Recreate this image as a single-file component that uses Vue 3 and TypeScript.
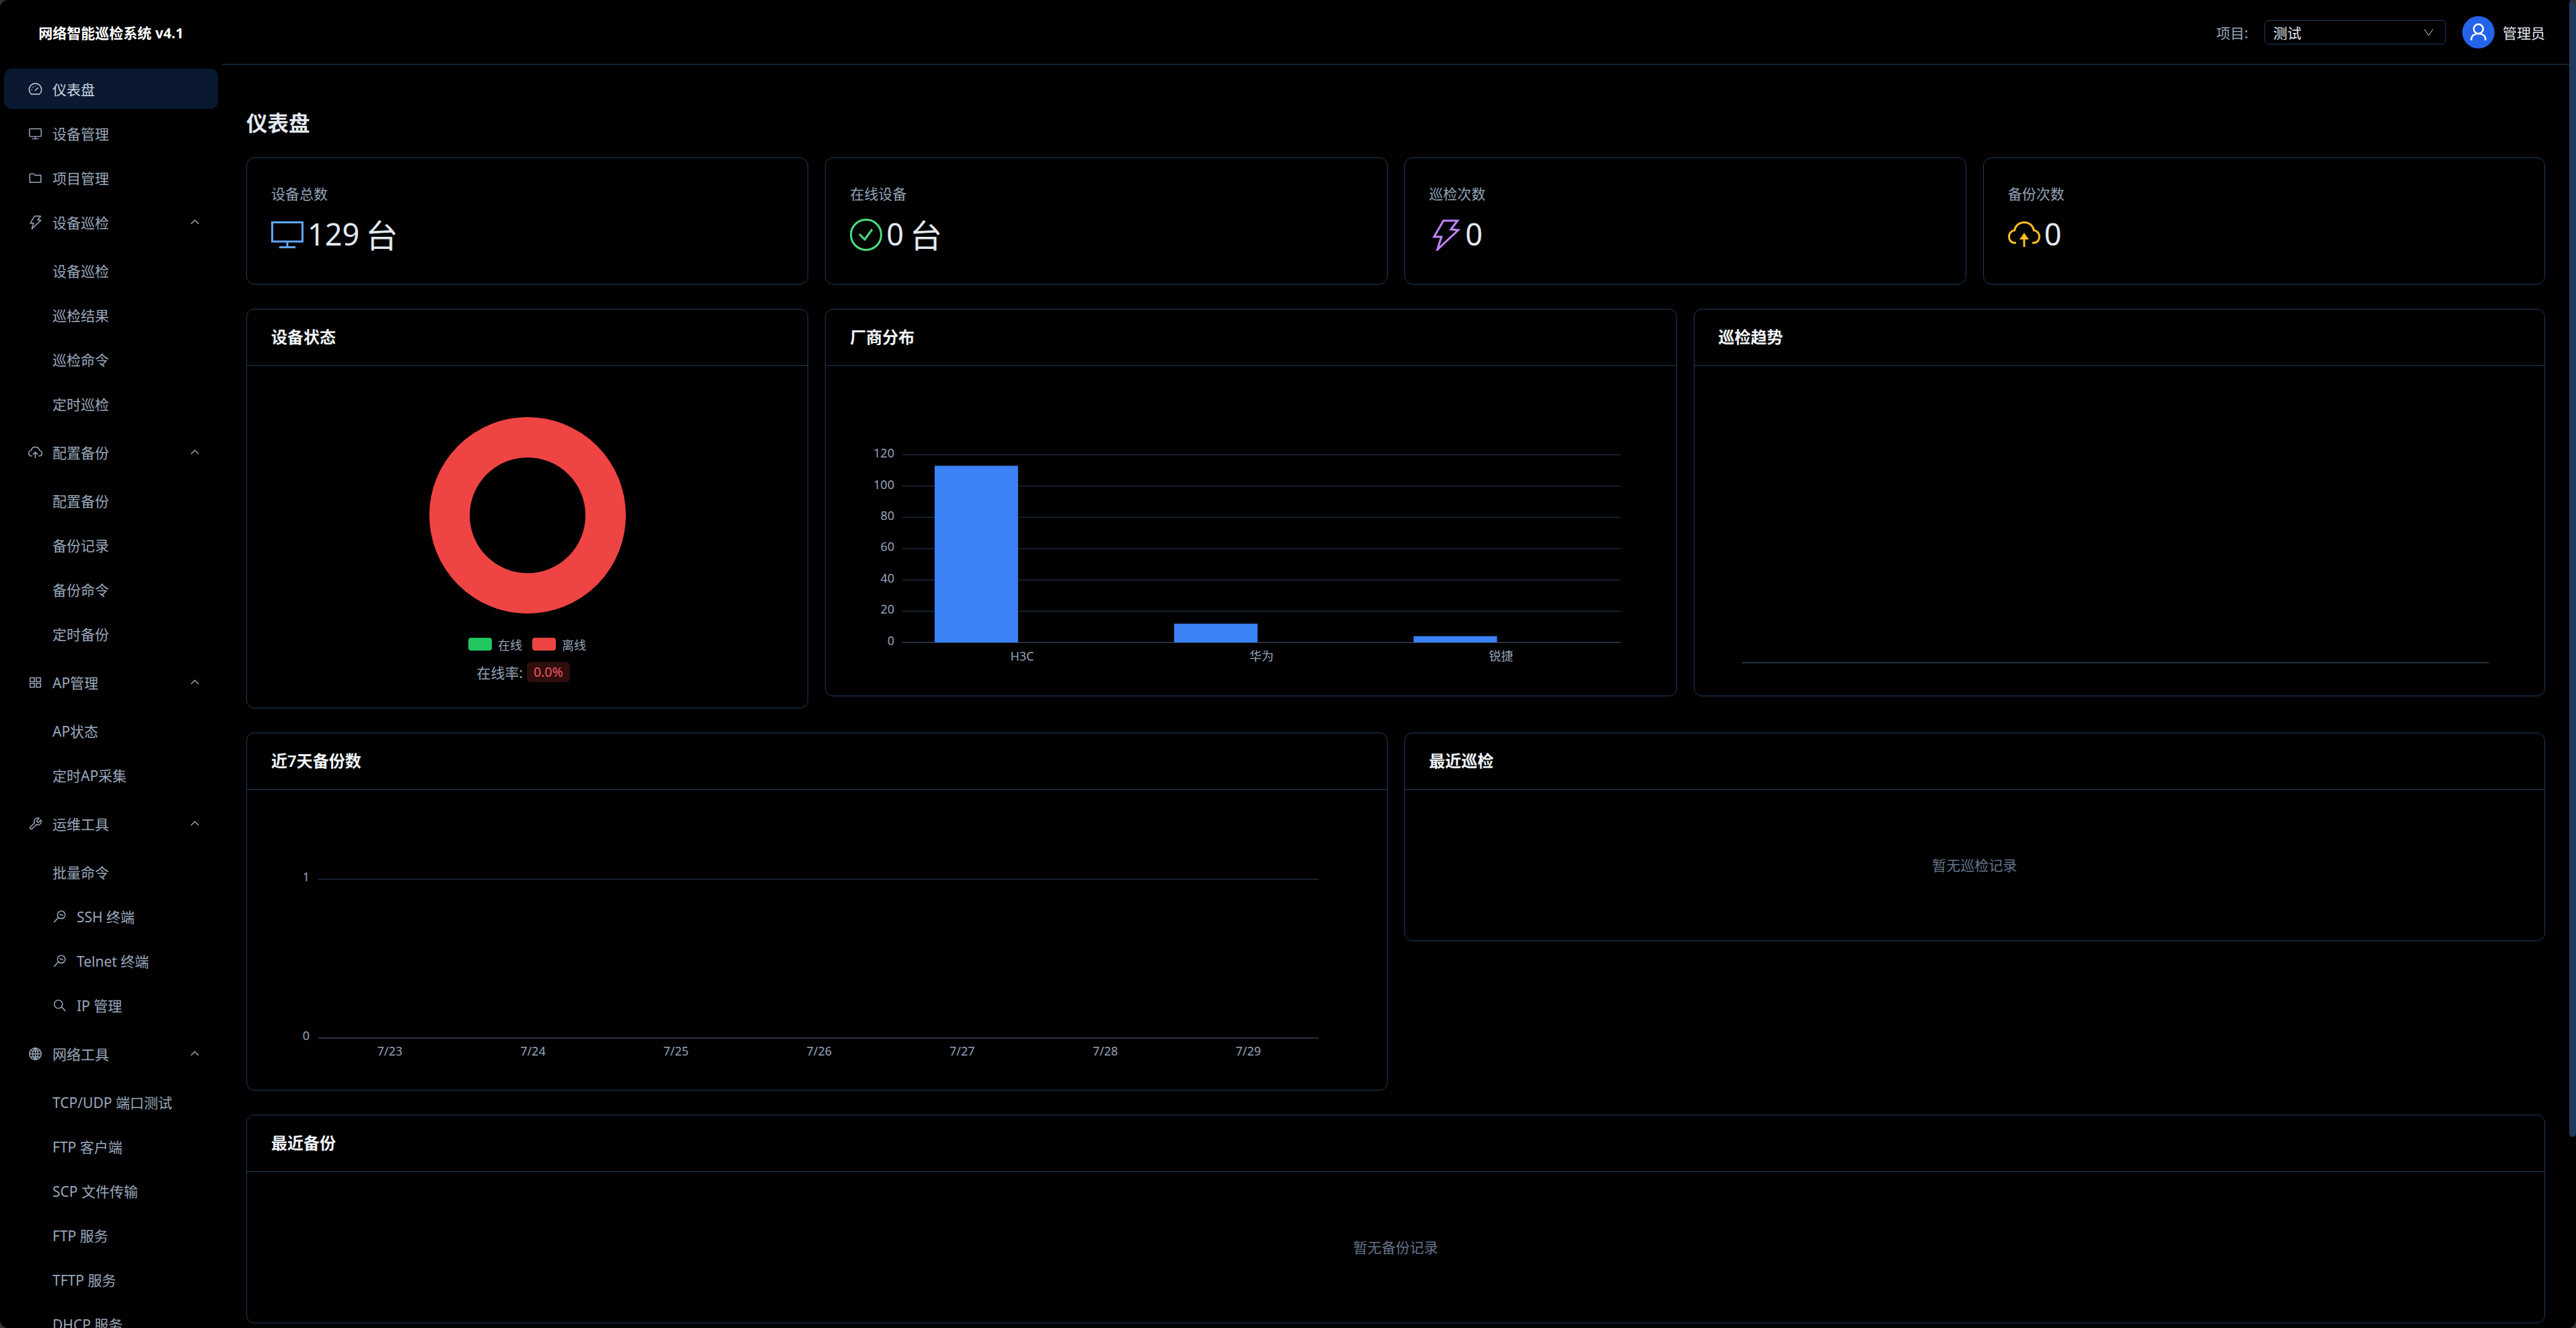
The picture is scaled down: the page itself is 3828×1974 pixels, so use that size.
<script setup lang="ts">
interface MenuChild {
  label: string
  icon?: string
}

interface MenuItem {
  label: string
  icon: string
  active?: boolean
  children?: MenuChild[]
}

const icons: Record<string, string> = {
  gauge: 'M5 20.5a10.5 10.5 0 1 1 14 0z M12 14l4-4 M6 13h.01 M8 8.5h.01 M12 7h.01',
  monitor: 'M3 4h18a1 1 0 0 1 1 1v11a1 1 0 0 1-1 1H3a1 1 0 0 1-1-1V5a1 1 0 0 1 1-1z M12 17v4 M7 21h10',
  folder: 'M2.5 5h7l2 2.5h10v12h-19z',
  bolt: 'M10.5 1.5H21L16 8l5.5.5L6 23l3-9.5H3.5z',
  cloud: 'M6 18H5C2 18 .8 15.5 .8 13.5 .8 10.5 3 8.8 4.8 8.8 5.5 5 8.5 2.8 12 2.8s6.5 2.2 7.2 6c1.8 0 4 1.7 4 4.7 0 2-1.2 4.5-4.2 4.5h-1 M12 21v-9 M8.5 15l3.5-3.5 3.5 3.5',
  grid: 'M3 4h7.5v6.5H3z M13.5 4H21v6.5h-7.5z M3 13.5h7.5V20H3z M13.5 13.5H21V20h-7.5z',
  wrench: 'M14.7 6.3a1 1 0 0 0 0 1.4l1.6 1.6a1 1 0 0 0 1.4 0l3.77-3.77a6 6 0 0 1-7.94 7.94l-6.91 6.91a2.12 2.12 0 0 1-3-3l6.91-6.91a6 6 0 0 1 7.94-7.94l-3.76 3.76z',
  globe: 'M12 2a10 10 0 1 0 0 20 10 10 0 0 0 0-20z M2 12h20 M3.5 7h17 M3.5 17h17 M12 2c-6 5-6 15 0 20 M12 2c6 5 6 15 0 20 M12 2v20',
  terminal: 'M15 2.5a6.5 6.5 0 1 0 0 13 6.5 6.5 0 0 0 0-13z M10.2 13.5 3 21 M12.5 8l5 2',
  search: 'M10 3a7 7 0 1 0 0 14 7 7 0 0 0 0-14z M15 14l6.5 7',
}

const menu: MenuItem[] = [
  { label: '仪表盘', icon: 'gauge', active: true },
  { label: '设备管理', icon: 'monitor' },
  { label: '项目管理', icon: 'folder' },
  {
    label: '设备巡检',
    icon: 'bolt',
    children: [{ label: '设备巡检' }, { label: '巡检结果' }, { label: '巡检命令' }, { label: '定时巡检' }],
  },
  {
    label: '配置备份',
    icon: 'cloud',
    children: [{ label: '配置备份' }, { label: '备份记录' }, { label: '备份命令' }, { label: '定时备份' }],
  },
  {
    label: 'AP管理',
    icon: 'grid',
    children: [{ label: 'AP状态' }, { label: '定时AP采集' }],
  },
  {
    label: '运维工具',
    icon: 'wrench',
    children: [
      { label: '批量命令' },
      { label: 'SSH 终端', icon: 'terminal' },
      { label: 'Telnet 终端', icon: 'terminal' },
      { label: 'IP 管理', icon: 'search' },
    ],
  },
  {
    label: '网络工具',
    icon: 'globe',
    children: [
      { label: 'TCP/UDP 端口测试' },
      { label: 'FTP 客户端' },
      { label: 'SCP 文件传输' },
      { label: 'FTP 服务' },
      { label: 'TFTP 服务' },
      { label: 'DHCP 服务' },
    ],
  },
]

// vendor chart
const vendorData = [
  { name: 'H3C', value: 113 },
  { name: '华为', value: 12 },
  { name: '锐捷', value: 4 },
]
const vendorTicks = [120, 100, 80, 60, 40, 20, 0]
const vendorZero = 411
const vendorScale = 2.325
const vendorLeft = 114
const vendorStep = 356

// backup chart
const backupDays = ['7/23', '7/24', '7/25', '7/26', '7/27', '7/28', '7/29']
const backupLeft = 106
const backupStep = 212.7
</script>

<template>
  <div class="shell">
    <aside class="sidebar">
      <div class="brand">网络智能巡检系统 v4.1</div>
      <nav class="menu">
        <template v-for="item in menu" :key="item.label">
          <div class="menu-item" :class="{ active: item.active }">
            <svg class="menu-icon" viewBox="0 0 24 24"><path :d="icons[item.icon]" /></svg>
            <span class="menu-label">{{ item.label }}</span>
            <svg v-if="item.children" class="chevron" viewBox="0 0 14 8"><path d="M1 7l6-6 6 6" /></svg>
          </div>
          <div v-if="item.children" class="submenu">
            <div v-for="child in item.children" :key="child.label" class="submenu-item">
              <svg v-if="child.icon" class="menu-icon" viewBox="0 0 24 24"><path :d="icons[child.icon]" /></svg>
              <span>{{ child.label }}</span>
            </div>
          </div>
        </template>
      </nav>
    </aside>

    <div class="main">
      <header class="topbar">
        <span class="project-label">项目:</span>
        <div class="project-select">
          <span>测试</span>
          <svg class="select-arrow" viewBox="0 0 14 10"><path d="M.5 .5L7 9.5 13.5 .5" /></svg>
        </div>
        <div class="avatar">
          <svg viewBox="0 0 48 48"><circle cx="24" cy="19" r="7" /><path d="M13.5 36v-1c0-6 4.500-9 10.500-9s10.500 3 10.500 9v1" /></svg>
        </div>
        <span class="user-name">管理员</span>
      </header>

      <main class="content">
        <h1 class="page-title">仪表盘</h1>

        <section class="stats">
          <div class="stat-card">
            <div class="stat-label">设备总数</div>
            <div class="stat-value">
              <svg class="stat-icon blue" viewBox="0 0 48 48"><path d="M1.500 5.500h45v28.500h-45z M24 34v8 M12 42.500h24" /></svg>
              <span class="stat-number">129</span><span class="stat-unit">台</span>
            </div>
          </div>
          <div class="stat-card">
            <div class="stat-label">在线设备</div>
            <div class="stat-value">
              <svg class="stat-icon green" viewBox="0 0 48 48"><circle cx="24" cy="24" r="22.500" /><path d="M14 23l8 8 11-15" /></svg>
              <span class="stat-number">0</span><span class="stat-unit">台</span>
            </div>
          </div>
          <div class="stat-card">
            <div class="stat-label">巡检次数</div>
            <div class="stat-value">
              <svg class="stat-icon purple" viewBox="0 0 48 48"><path d="M21 3h21L32 16l11 1L12 46l6-19H7z" /></svg>
              <span class="stat-number">0</span>
            </div>
          </div>
          <div class="stat-card">
            <div class="stat-label">备份次数</div>
            <div class="stat-value">
              <svg class="stat-icon yellow" viewBox="0 0 48 48">
                <path d="M12 36H10C4 36 1.500 31 1.500 27 1.500 21 6 17.500 9.500 17.500 11 10 17 5.500 24 5.500S37 10 38.500 17.500C42 17.500 46.500 21 46.500 27 46.500 31 44 36 38 36H36 M24 30v12" />
                <polygon points="24,21 31,31 17,31" />
              </svg>
              <span class="stat-number">0</span>
            </div>
          </div>
        </section>

        <section class="row row-charts">
          <div class="card">
            <div class="card-header">设备状态</div>
            <div class="status-body">
              <svg class="donut" viewBox="0 0 292 292">
                <circle cx="146" cy="146" r="116" />
              </svg>
              <div class="legend">
                <span class="legend-swatch online"></span><span>在线</span>
                <span class="legend-swatch offline"></span><span>离线</span>
              </div>
              <div class="rate">
                <span>在线率:</span>
                <span class="rate-tag">0.0%</span>
              </div>
            </div>
          </div>

          <div class="card">
            <div class="card-header">厂商分布</div>
            <svg class="chart vendor-chart" viewBox="0 0 1264 490">
              <g v-for="tick in vendorTicks" :key="tick">
                <line
                  :class="tick === 0 ? 'axis' : 'grid-line'"
                  :x1="vendorLeft"
                  x2="1182"
                  :y1="vendorZero - tick * vendorScale"
                  :y2="vendorZero - tick * vendorScale"
                />
                <text class="tick" x="102" :y="vendorZero - tick * vendorScale + 4" text-anchor="end">{{ tick }}</text>
              </g>
              <g v-for="(bar, i) in vendorData" :key="bar.name">
                <rect
                  class="bar"
                  :x="vendorLeft + 48 + i * vendorStep"
                  :y="vendorZero - bar.value * vendorScale"
                  width="124"
                  :height="bar.value * vendorScale"
                />
                <text class="tick" :x="vendorLeft + vendorStep / 2 + i * vendorStep" y="438" text-anchor="middle">{{ bar.name }}</text>
              </g>
            </svg>
          </div>

          <div class="card">
            <div class="card-header">巡检趋势</div>
            <svg class="chart vendor-chart" viewBox="0 0 1264 490">
              <line class="axis" x1="71" x2="1181" y1="441" y2="441" />
            </svg>
          </div>
        </section>

        <section class="row row-split">
          <div class="card">
            <div class="card-header">近7天备份数</div>
            <svg class="chart backup-chart" viewBox="0 0 1694 446">
              <line class="grid-line" :x1="backupLeft" x2="1593" y1="133" y2="133" />
              <line class="axis" :x1="backupLeft" x2="1593" y1="369" y2="369" />
              <text class="tick" x="93" y="136" text-anchor="end">1</text>
              <text class="tick" x="93" y="372" text-anchor="end">0</text>
              <text
                v-for="(day, i) in backupDays"
                :key="day"
                class="tick"
                :x="backupLeft + backupStep / 2 + i * backupStep"
                y="395"
                text-anchor="middle"
              >{{ day }}</text>
            </svg>
          </div>
          <div class="card">
            <div class="card-header">最近巡检</div>
            <div class="empty inspect-empty">暂无巡检记录</div>
          </div>
        </section>

        <section class="card">
          <div class="card-header">最近备份</div>
          <div class="empty backup-empty">暂无备份记录</div>
        </section>
      </main>
    </div>

    <div class="scroll-thumb"></div>
  </div>
</template>

<style>
html,
body {
  margin: 0;
  background: #333;
}
</style>

<style scoped>
.shell {
  position: relative;
  display: flex;
  height: 100vh;
  overflow: hidden;
  border-radius: 12px;
  background: #000;
  color: #e2e8f0;
  font-family: "Noto Sans", "Noto Sans CJK SC", sans-serif;
  font-size: 21px;
}

.sidebar {
  flex: 0 0 330px;
  overflow: hidden;
}

.brand {
  height: 102px;
  padding-top: 30px;
  box-sizing: border-box;
  color: #fff;
  font-weight: 700;
  line-height: 38px;
  text-align: center;
}

.menu {
  padding: 0 6px;
}

.menu-item,
.submenu-item {
  display: flex;
  align-items: center;
  height: 60px;
  margin-bottom: 6px;
  color: #9aa8bc;
}

.menu-item {
  padding: 0 28px 0 36px;
  border-radius: 12px;
}

.menu-item.active {
  background: #0a1930;
  color: #cbd5e1;
}

.menu-label {
  flex: 1;
  margin-left: 15px;
}

.menu-icon {
  flex: 0 0 21px;
  width: 21px;
  height: 21px;
  fill: none;
  stroke: currentColor;
  stroke-width: 1.7;
  stroke-linecap: round;
  stroke-linejoin: round;
}

.chevron {
  width: 13px;
  height: 8px;
  fill: none;
  stroke: currentColor;
  stroke-width: 1.5;
}

.submenu {
  padding-top: 6px;
  padding-bottom: 6px;
}

.submenu-item {
  padding-left: 72px;
}

.submenu-item .menu-icon {
  margin-right: 15px;
}

.main {
  flex: 1;
  min-width: 0;
  margin-right: 10px;
}

.topbar {
  display: flex;
  align-items: center;
  box-sizing: border-box;
  height: 96px;
  padding: 0 36px;
  border-bottom: 1px solid #1e3a5f;
  justify-content: flex-end;
}

.project-label {
  margin-right: 24px;
  color: #94a3b8;
}

.project-select {
  display: flex;
  align-items: center;
  justify-content: space-between;
  box-sizing: border-box;
  width: 270px;
  height: 36px;
  padding: 0 18px 0 12px;
  border: 1px solid #1e3a5f;
  border-radius: 6px;
}

.select-arrow {
  width: 14px;
  height: 10px;
  fill: none;
  stroke: #94a3b8;
  stroke-width: 1.2;
}

.avatar {
  width: 48px;
  height: 48px;
  margin-left: 24px;
  border-radius: 50%;
  background: #2563eb;
}

.avatar svg {
  display: block;
  fill: none;
  stroke: #fff;
  stroke-width: 2.500;
}

.user-name {
  margin-left: 12px;
}

.content {
  padding: 0 36px;
}

.page-title {
  margin: 66px 0 30px;
  color: #e2e8f0;
  font-size: 31.500px;
  font-weight: 700;
  line-height: 42px;
}

.stats {
  display: grid;
  grid-template-columns: repeat(4, 1fr);
  gap: 25px;
  margin-bottom: 36px;
}

.card,
.stat-card {
  box-sizing: border-box;
  border: 1px solid #1e3a5f;
  border-radius: 12px;
  background: #000;
}

.stat-card {
  height: 189px;
  padding: 36px;
}

.stat-label {
  margin-bottom: 8px;
  color: #94a3b8;
  line-height: 34px;
}

.stat-value {
  display: flex;
  align-items: center;
  height: 72px;
}

.stat-number {
  margin-left: 6px;
  padding-bottom: 4px;
  font-size: 45px;
}

.stat-unit {
  margin-left: 9px;
  padding-bottom: 4px;
  font-size: 48px;
}

.stat-icon {
  flex: 0 0 48px;
  width: 48px;
  height: 48px;
  fill: none;
  stroke-width: 3;
  stroke: currentColor;
}

.stat-icon polygon {
  fill: currentColor;
  stroke: none;
}

.blue {
  color: #60a5fa;
}

.green {
  color: #4ade80;
}

.purple {
  color: #c084fc;
}

.yellow {
  color: #fbbf24;
}

.row {
  display: grid;
  align-items: start;
  gap: 25px;
  margin-bottom: 36px;
}

.row-charts {
  grid-template-columns: 835fr 1265.5fr 1265.5fr;
}

.row-split {
  grid-template-columns: 1fr 1fr;
}

.card-header {
  box-sizing: border-box;
  height: 84px;
  padding: 0 36px;
  border-bottom: 1px solid #1e3a5f;
  color: #f1f5f9;
  font-size: 24px;
  font-weight: 600;
  line-height: 82px;
}

.status-body {
  display: flex;
  flex-direction: column;
  align-items: center;
  height: 508px;
  padding-top: 76px;
  box-sizing: border-box;
}

.donut {
  width: 292px;
  height: 292px;
  fill: none;
  stroke: #ef4444;
  stroke-width: 60;
}

.legend {
  display: flex;
  align-items: center;
  height: 19px;
  margin-top: 36px;
  color: #94a3b8;
  font-size: 18px;
}

.legend-swatch {
  width: 35px;
  height: 19px;
  margin-right: 9px;
  border-radius: 4px;
}

.legend-swatch.online {
  background: #22c55e;
}

.legend-swatch.offline {
  margin-left: 15px;
  background: #ef4444;
}

.rate {
  display: flex;
  align-items: center;
  gap: 6px;
  height: 30px;
  margin-top: 17px;
  margin-right: 12px;
  color: #94a3b8;
}

.rate-tag {
  padding: 0 10px;
  border-radius: 6px;
  background: #300e0e;
  color: #ef5a5f;
  font-size: 19.500px;
  line-height: 30px;
}

.chart {
  display: block;
  width: 100%;
}

.vendor-chart {
  height: 490px;
}

.backup-chart {
  height: 446px;
}

.grid-line {
  stroke: #1e293b;
  stroke-width: 1.500;
}

.axis {
  stroke: #334155;
  stroke-width: 1.500;
}

.tick {
  fill: #94a3b8;
  font-size: 18px;
}

.bar {
  fill: #3b82f6;
}

.empty {
  display: flex;
  align-items: center;
  justify-content: center;
  padding-bottom: 3px;
  box-sizing: border-box;
  color: #64748b;
}

.inspect-empty {
  height: 224px;
}

.backup-empty {
  height: 224px;
}

.scroll-thumb {
  position: absolute;
  top: 0;
  right: 0;
  width: 10px;
  height: 1690px;
  border-radius: 5px;
  background: #1e3a5f;
}
</style>
